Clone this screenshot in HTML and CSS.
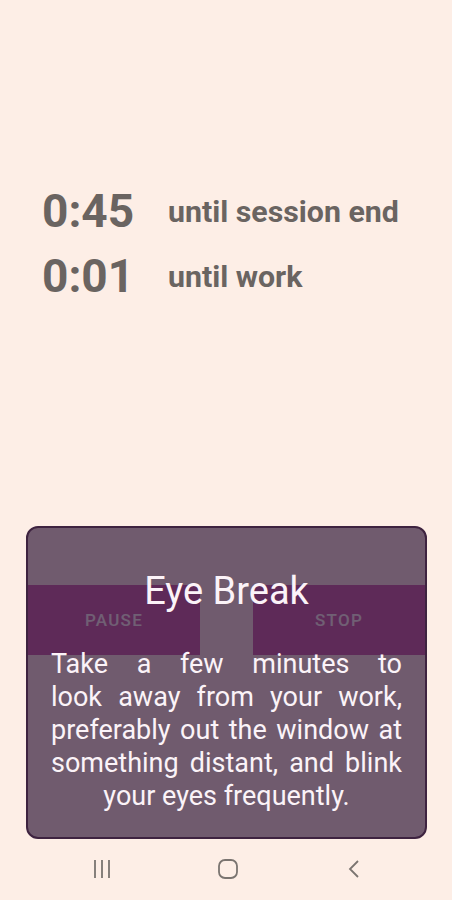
FILE: index.html
```html
<!DOCTYPE html>
<html lang="en">
<head>
  <meta charset="UTF-8">
  <meta name="viewport" content="width=device-width, initial-scale=1">
  <title>Eye Break</title>
  <link rel="stylesheet" href="styles.css">
</head>

<body>

  <div class="screen">
    <div class="timers">
      <div class="timer-row">
        <div class="time">0:45</div>
        <div class="label">until session end</div>
      </div>
      <div class="timer-row">
        <div class="time">0:01</div>
        <div class="label">until work</div>
      </div>
    </div>

    <div class="controls">
      <div class="btn">PAUSE</div>
      <div class="btn">STOP</div>

      <div class="dialog">
        <div class="dialog-title">Eye Break</div>
        <p class="dialog-text">Take a few minutes to look&nbsp;away from your work, preferably out the window at something distant, and blink your eyes frequently.</p>
      </div>
    </div>
  </div>

  <div class="navbar">
    <svg class="nav-icon" width="24" height="24" viewBox="0 0 24 24">
      <path d="M5 3v18M12 3v18M19 3v18" stroke="#7a7470" stroke-width="1.8" fill="none"/>
    </svg>
    <svg class="nav-icon" width="24" height="24" viewBox="0 0 24 24">
      <rect x="3" y="3" width="18" height="18" rx="6" stroke="#7a7470" stroke-width="1.8" fill="none"/>
    </svg>
    <svg class="nav-icon" width="24" height="24" viewBox="0 0 24 24">
      <path d="M16 4l-8 8 8 8" stroke="#7a7470" stroke-width="1.8" fill="none"/>
    </svg>
  </div>

</body>
</html>
```

FILE: styles.css
```css
:root {
  --bg-color: #fdeee6;
  --font-color: #6a6461;
  --button-color: #b92e8e;
  --dialog-color: rgba(64, 41, 70, 0.75);
  --dialog-border: #3e2340;
}

* { margin: 0; padding: 0; box-sizing: border-box; }

body {
  font-family: Roboto, 'Noto Sans', sans-serif;
  background-color: var(--bg-color);
  width: 452px;
  height: 900px;
  display: flex;
  flex-direction: column;
  overflow: hidden;
}

.screen {
  flex-grow: 1;
  display: flex;
  flex-direction: column;
}

.timers {
  padding: 186px 0 0 42px;
  display: flex;
  flex-direction: column;
  gap: 15px;
  color: var(--font-color);
  font-weight: bold;
}

.timer-row {
  display: flex;
  align-items: center;
  height: 50px;
}

.time {
  font-size: 46px;
  width: 126px;
}

.label {
  font-size: 30.3px;
}

.controls {
  position: relative;
  margin-top: 284px;
  display: flex;
  justify-content: space-between;
  padding: 0 27px 0 28px;
}

.btn {
  width: 172px;
  height: 70px;
  background-color: var(--button-color);
  color: #fff;
  font-size: 17px;
  font-weight: 500;
  letter-spacing: 1.3px;
  display: flex;
  align-items: center;
  justify-content: center;
}

.dialog {
  position: absolute;
  top: -59px;
  left: 26px;
  width: 401px;
  height: 313px;
  background-color: var(--dialog-color);
  border: 2px solid var(--dialog-border);
  border-radius: 12px;
  padding: 41px 23px 0 23px;
  color: #fbf3f8;
}

.dialog-title {
  font-size: 38px;
  text-align: center;
  line-height: 44px;
}

.dialog-text {
  margin-top: 35px;
  font-size: 27px;
  line-height: 33px;
  text-align: justify;
  text-align-last: center;
}

.navbar {
  height: 62px;
  display: flex;
  justify-content: space-between;
  align-items: center;
  padding: 0 86px 0 90px;
}
```
